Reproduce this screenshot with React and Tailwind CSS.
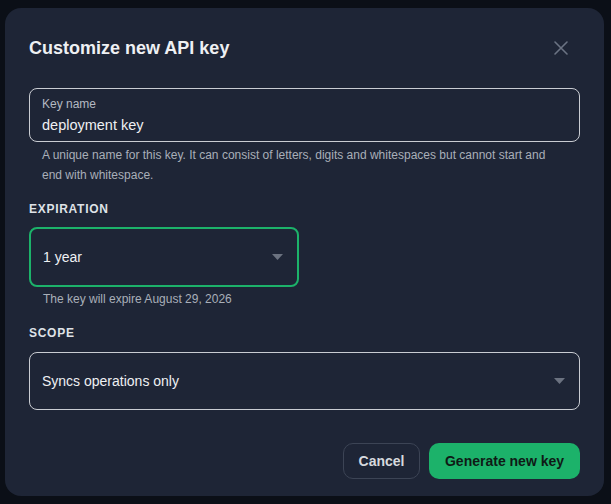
import React from 'react';

const Caret = () => (
  <svg width="11" height="6" viewBox="0 0 11 6" className="shrink-0">
    <path d="M0 0 L11 0 L5.5 6 Z" fill="#6b7280" />
  </svg>
);

export default function App() {
  return (
    <div
      className="min-h-screen w-full bg-[#0b0f17] pt-[8px] pl-[5px] pr-[7px] pb-[8px]"
      style={{ fontFamily: '"Liberation Sans", Arial, sans-serif' }}
    >
      <div className="h-[488px] w-full rounded-[16px] bg-[#1e2536] px-6 pt-[26px]">
        {/* Header */}
        <div className="flex items-center justify-between">
          <h2 className="text-lg leading-7 font-bold text-[#eef0f3]">Customize new API key</h2>
          <svg width="16" height="16" viewBox="0 0 16 16" className="mr-[11px]">
            <path d="M2 2 L14 14 M14 2 L2 14" stroke="#6b7383" strokeWidth="1.6" strokeLinecap="round" />
          </svg>
        </div>

        {/* Key name */}
        <div className="mt-[26px] h-[54px] rounded-[8px] border border-[#c9ccd2] px-3 pt-[7px]">
          <div className="text-[12px] leading-4 text-[#b4b9c2]">Key name</div>
          <div className="mt-[3px] text-[14.5px] leading-5 text-[#eef0f3]">deployment key</div>
        </div>
        <p className="mt-[3px] pl-[13px] pr-8 text-[12px] leading-5 text-[#a9afb9]">
          A unique name for this key. It can consist of letters, digits and whitespaces but cannot start and end with whitespace.
        </p>

        {/* Expiration */}
        <div className="mt-[16px] text-[12px] leading-4 font-bold tracking-[0.06em] text-[#dfe2e7]">EXPIRATION</div>
        <div className="mt-[10px] flex h-[60px] w-[270px] items-center justify-between rounded-[8px] border-2 border-[#1cb26a] pl-[12px] pr-[14px]">
          <span className="text-[14px] text-[#eef0f3]">1 year</span>
          <Caret />
        </div>
        <div className="mt-[4px] pl-[14px] text-[12px] leading-4 text-[#a9afb9]">The key will expire August 29, 2026</div>

        {/* Scope */}
        <div className="mt-[18px] text-[12px] leading-4 font-bold tracking-[0.06em] text-[#dfe2e7]">SCOPE</div>
        <div className="mt-[11px] flex h-[58px] items-center justify-between rounded-[8px] border border-[#c9ccd2] pl-[12px] pr-[14px]">
          <span className="text-[14px] text-[#eef0f3]">Syncs operations only</span>
          <Caret />
        </div>

        {/* Actions */}
        <div className="mt-[33px] flex justify-end gap-[9px]">
          <button className="h-9 w-[77px] rounded-[10px] border border-[#3c4455] text-[14px] font-bold text-[#d6d9de]">
            Cancel
          </button>
          <button className="h-9 w-[151px] rounded-[10px] bg-[#1cb26a] text-[14px] font-bold text-[#0f1a16]">
            Generate new key
          </button>
        </div>
      </div>
    </div>
  );
}
